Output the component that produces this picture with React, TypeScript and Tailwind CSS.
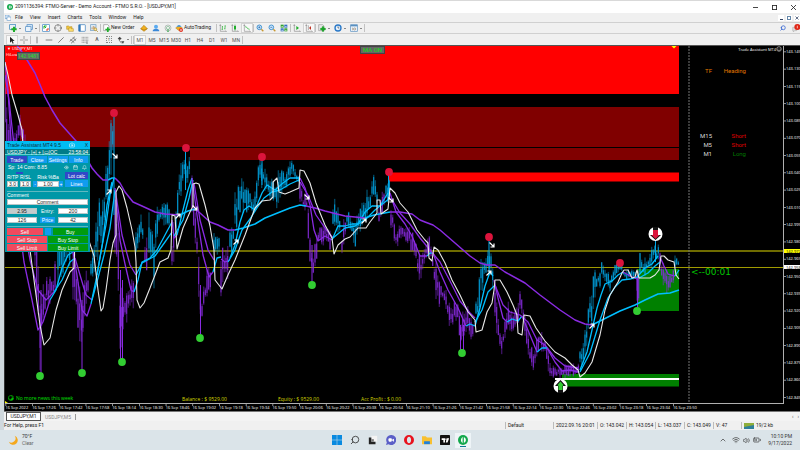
import type { ReactNode } from "react";
import { Bell, Calendar, Camera, ChevronUp, Eye, Search, Volume2, Wifi, BatteryMedium, Crosshair } from "lucide-react";

const BLUE = "#00a8e8";
const PURPLE = "#8a2be2";

type Band = { up: boolean; pts: [number, number, number][] };

// x, high, low for every leg of the price
const LEGS: Band[] = [
  { up: false, pts: [[5, 60, 150], [8, 110, 160], [12, 140, 190], [18, 107, 150], [22, 112, 150], [26, 125, 170], [32, 190, 250], [36, 225, 285], [40, 290, 374], [42, 280, 350], [46, 275, 310], [52, 270, 305], [56, 255, 300]] },
  { up: true, pts: [[58, 230, 290], [64, 220, 272], [70, 225, 268]] },
  { up: false, pts: [[73, 235, 300], [78, 270, 330], [82, 300, 371], [85, 270, 335], [89, 262, 300]] },
  { up: true, pts: [[91, 240, 290], [95, 225, 275], [98, 190, 262], [102, 205, 260], [105, 165, 225], [108, 145, 200], [111, 118, 180], [113, 114, 160]] },
  { up: false, pts: [[115, 180, 260], [118, 220, 300], [120, 270, 350], [122, 290, 361], [124, 300, 330], [127, 285, 322], [130, 284, 316], [133, 266, 326]] },
  { up: true, pts: [[136, 228, 266], [140, 208, 244], [143, 216, 250]] },
  { up: false, pts: [[145, 240, 275], [147, 235, 288]] },
  { up: true, pts: [[149, 208, 256], [152, 218, 262], [154, 225, 290], [157, 198, 238], [160, 200, 230], [164, 192, 228], [168, 193, 226], [170, 200, 240]] },
  { up: false, pts: [[172, 215, 290], [174, 212, 276]] },
  { up: true, pts: [[176, 205, 232], [178, 184, 215], [180, 165, 205], [183, 152, 198], [185, 150, 182], [188, 154, 186], [190, 148, 190]] },
  { up: false, pts: [[192, 175, 222], [194, 200, 240], [197, 212, 280], [199, 260, 310], [201, 290, 336], [204, 282, 308], [208, 266, 300], [211, 258, 290]] },
  { up: true, pts: [[214, 222, 264], [217, 226, 258], [219, 235, 262]] },
  { up: false, pts: [[221, 246, 300], [224, 248, 284], [228, 243, 280]] },
  { up: true, pts: [[230, 226, 260], [233, 220, 250], [235, 190, 242], [237, 186, 236], [240, 168, 218], [244, 182, 214], [248, 185, 215], [253, 202, 220], [256, 174, 208], [259, 160, 192], [262, 156, 188], [266, 168, 196], [271, 175, 204], [276, 180, 212], [280, 160, 198], [285, 172, 194], [290, 158, 182], [293, 156, 180], [298, 172, 188]] },
  { up: false, pts: [[300, 180, 202], [303, 194, 212], [307, 192, 214], [309, 215, 252], [312, 250, 284], [315, 238, 274], [318, 223, 247], [322, 220, 246], [327, 223, 247], [331, 230, 260]] },
  { up: true, pts: [[333, 196, 234], [336, 200, 230], [340, 210, 238]] },
  { up: false, pts: [[342, 220, 272], [345, 218, 240]] },
  { up: true, pts: [[347, 210, 230], [352, 212, 236], [355, 214, 250], [358, 212, 238], [362, 202, 228], [366, 190, 222], [370, 184, 214], [374, 170, 198], [377, 182, 214]] },
  { up: false, pts: [[379, 200, 224], [382, 190, 218], [384, 192, 214]] },
  { up: true, pts: [[386, 173, 208], [388, 172, 204], [390, 176, 205]] },
  { up: false, pts: [[391, 200, 230], [394, 222, 242], [397, 230, 248], [401, 220, 244], [405, 220, 242], [410, 226, 252], [414, 230, 254], [418, 250, 276], [421, 256, 286], [424, 242, 266], [428, 234, 260], [431, 238, 268], [434, 260, 284], [438, 265, 320], [441, 282, 304], [445, 284, 308], [449, 302, 330], [453, 303, 326], [457, 297, 320], [461, 315, 352], [465, 304, 334], [468, 306, 342], [473, 316, 340]] },
  { up: true, pts: [[476, 300, 322], [479, 280, 318], [482, 248, 302], [484, 250, 290], [487, 240, 284], [489, 238, 276], [491, 248, 280], [493, 268, 292]] },
  { up: false, pts: [[495, 278, 325], [498, 315, 342], [501, 335, 356], [505, 320, 346], [508, 295, 326], [512, 303, 336], [516, 308, 336], [520, 287, 324], [523, 298, 324], [526, 318, 344], [529, 334, 364], [532, 348, 375], [535, 344, 365], [539, 323, 350], [543, 334, 355], [547, 340, 366], [550, 358, 379], [554, 364, 378], [560, 366, 381], [566, 362, 378], [572, 360, 379], [578, 362, 378]] },
  { up: true, pts: [[580, 348, 372], [583, 345, 370], [586, 318, 358], [589, 302, 336], [592, 282, 326], [594, 270, 320], [597, 268, 296], [600, 262, 288], [603, 262, 278], [606, 266, 292], [610, 274, 292], [613, 266, 282], [617, 260, 278], [621, 263, 273], [625, 268, 280], [632, 265, 282], [636, 266, 280]] },
  { up: false, pts: [[637, 268, 308], [639, 268, 302]] },
  { up: true, pts: [[640, 250, 280], [643, 254, 278], [648, 256, 274], [652, 244, 270], [655, 238, 264], [658, 244, 268]] },
  { up: false, pts: [[660, 250, 274], [663, 260, 286], [666, 268, 296], [670, 270, 296], [673, 262, 288]] },
  { up: true, pts: [[675, 252, 274], [678, 254, 272]] },
];

const BAR_STEP = 1.668;

// small repeatable noise so the bars stay the same between renders
function noise(i: number) {
  const v = Math.sin(i * 127.1 + 11.7) * 43758.5453;
  return v - Math.floor(v);
}

function buildBars() {
  const bars: { x: number; hi: number; lo: number; top: number; bottom: number; up: boolean }[] = [];
  let n = 0;
  for (const leg of LEGS) {
    const { pts } = leg;
    const last = pts[pts.length - 1][0];
    for (let x = pts[0][0]; x <= last + 0.6; x += BAR_STEP) {
      let k = 0;
      while (k < pts.length - 2 && pts[k + 1][0] < x) k++;
      const a = pts[k];
      const b = pts[k + 1];
      const t = Math.min(1, (x - a[0]) / (b[0] - a[0]));
      const hi = a[1] + (b[1] - a[1]) * t;
      const lo = a[2] + (b[2] - a[2]) * t;
      const h = lo - hi;
      const wickHi = hi + h * 0.42 * noise(n);
      const wickLo = lo - h * 0.42 * noise(n + 500);
      const top = wickHi + (wickLo - wickHi) * 0.4 * noise(n + 900);
      const bottom = wickLo - (wickLo - wickHi) * 0.4 * noise(n + 1300);
      bars.push({ x, hi: wickHi, lo: wickLo, top, bottom, up: leg.up });
      n++;
    }
  }
  return bars;
}

const BARS = buildBars();

const SLOW: [string, string][] = [
  [PURPLE, "17,46 20,49 27,60 35,73 41,87 45,97 52,110 60,123 68,132 76,141 85,156 92,168 97,174 103,180 108,180"],
  ["#00bfff", "108,180 112,178 115,178"],
  [PURPLE, "115,178 120,183 125,192 133,202 142,206 155,212 165,214 180,215"],
  ["#00bfff", "180,215 188,211 195,209"],
  [PURPLE, "195,209 200,213 210,222 218,225 228,230 235,230"],
  ["#00bfff", "235,230 243,228 255,224 265,218 280,212 290,208 300,205 306,206"],
  [PURPLE, "306,206 315,208 325,211 345,216 365,218"],
  ["#00bfff", "365,218 374,215 390,212"],
  [PURPLE, "390,212 400,212 412,214 420,220 425,222 433,225 440,230 455,243 470,256 480,263 487,265 495,265 505,272 525,283 540,295 560,310 575,320 585,324 592,325"],
  ["#00bfff", "592,325 600,321 610,316 620,311 635,305 645,300 658,294 670,293 679,290"],
];

const FAST: [string, string][] = [
  [PURPLE, "5,62 8,90 11,140 16,200 24,262 32,300 38,330 43,322 50,300"],
  [PURPLE, "5,75 9,100 14,145 22,215 30,260 38,290 46,300 54,292"],
  ["#00bfff", "50,300 56,290 62,268 68,255 73,252"],
  ["#00bfff", "54,292 62,280 70,262 75,258"],
  [PURPLE, "73,252 77,275 82,310 87,316 91,304"],
  [PURPLE, "75,258 80,275 86,295 92,300"],
  ["#00bfff", "91,304 96,280 101,252 106,225 110,195 114,178"],
  ["#00bfff", "92,300 98,278 104,255 110,228 115,190"],
  ["#00bfff", "97,275 103,240 107,205 112,182"],
  [PURPLE, "116,200 120,240 125,264 131,290 134,292"],
  [PURPLE, "115,188 122,235 130,265 136,275"],
  ["#00bfff", "134,292 138,280 142,262 150,258 157,250 165,235 172,222"],
  ["#00bfff", "136,275 142,263 155,256 165,242 172,232"],
  [PURPLE, "172,220 174,238 177,235"],
  ["#00bfff", "177,235 183,210 188,190 192,178"],
  ["#00bfff", "174,236 183,220 189,198 193,180"],
  [PURPLE, "192,178 197,215 203,255 209,277 213,272"],
  [PURPLE, "194,183 200,220 208,250 214,260"],
  ["#00bfff", "213,272 217,258 221,257"],
  [PURPLE, "221,259 225,262 230,260"],
  ["#00bfff", "230,258 235,245 240,222 244,210 249,206 255,210 262,193 267,185 275,190 283,183 290,178 299,178"],
  ["#00bfff", "228,262 235,250 242,230 250,219 257,208 264,198 272,192 280,190 290,184 299,180"],
  [PURPLE, "300,178 305,188 310,205 314,230 318,241 325,236 332,240"],
  [PURPLE, "300,182 308,195 316,215 325,228 333,238"],
  ["#00bfff", "332,240 338,226 345,226 352,224 358,224 365,212 372,206 380,206 388,193"],
  ["#00bfff", "333,238 345,228 355,226 366,219 375,210 390,198"],
  [PURPLE, "390,193 396,212 405,224 412,236 420,256 427,256"],
  ["#00bfff", "427,256 430,253 433,253"],
  [PURPLE, "391,198 400,213 410,224 420,238 430,250 440,262 450,281 460,301 470,313 475,318"],
  [PURPLE, "433,253 440,272 448,290 458,308 466,326"],
  ["#00bfff", "466,326 470,324 475,326 480,308 485,286 490,272 493,276"],
  ["#00bfff", "475,322 482,310 488,292 494,286"],
  [PURPLE, "494,280 498,298 503,318 507,322"],
  ["#00bfff", "507,322 512,319 518,321 522,316"],
  [PURPLE, "495,285 503,305 510,312 520,315 528,322 537,340 545,345 555,358 565,366 578,368"],
  [PURPLE, "522,316 530,335 537,352"],
  ["#00bfff", "537,352 542,348 547,348"],
  [PURPLE, "547,348 555,362 562,371 570,370 578,372"],
  ["#00bfff", "580,370 587,352 592,330 597,308 601,295 605,284 612,281 618,275 623,272"],
  ["#00bfff", "580,372 590,353 600,320 608,298 615,287 622,280 630,279 637,277 645,268 652,264 658,256"],
  [PURPLE, "623,272 630,276 637,279"],
  ["#00bfff", "639,278 648,273 655,266 660,262"],
  [PURPLE, "660,257 664,266 668,274 675,276"],
  ["#00bfff", "675,276 679,270"],
];

const WHITE_LINE =
  "5,62 8,75 12,95 18,115 22,130 23,146 24,200 28,235 34,280 40,325 44,345 50,338 56,310 62,290 70,272 74,268 75,240 80,235 88,238 94,256 98,290 101,311 103,308 106,290 110,260 113,243 116,235 116,192 119,186 122,190 127,208 132,230 135,247 136,262 137,300 140,308 144,303 150,288 155,275 160,262 168,258 171,250 172,215 175,216 177,249 183,228 190,212 193,206 193,184 196,183 199,184 205,205 210,226 214,250 215,280 222,289 228,275 235,260 245,235 255,208 262,201 270,200 273,197 273,182 277,178 279,192 285,194 290,192 299,188 300,170 304,171 310,183 316,203 325,225 332,238 334,254 338,245 345,239 350,237 358,228 366,228 370,222 377,213 377,200 380,200 381,214 388,209 390,188 395,193 400,203 408,212 417,230 425,240 428,243 429,258 432,261 434,247 438,250 445,263 452,280 460,295 468,312 475,320 476,332 482,330 487,312 492,303 494,290 495,280 500,280 507,292 513,305 517,315 518,333 522,335 524,315 530,316 536,328 545,341 555,352 565,358 572,365 578,370 580,377 585,373 592,362 600,335 605,310 610,295 618,282 622,273 624,270 628,270 632,278 635,277 637,270 639,278 650,278 655,275 659,270 661,256 664,256 668,260 674,262 676,275 679,279";

const TOPS = [[114, 113], [186, 148], [262, 157], [389, 172], [489, 237], [620, 263]];
const BOTTOMS = [[40, 376], [82, 373], [122, 362], [200, 338], [312, 285], [462, 353], [637, 311]];
const UP_ARROWS = [[109, 192], [178, 216], [236, 242], [364, 221], [489, 273], [592, 326]];
const DOWN_ARROWS = [[115, 156], [195, 208], [307, 197], [391, 200], [492, 245]];

const PRICES = Array.from({ length: 21 }, (_, i) => (143.145 - i * 0.015).toFixed(3));
const TIMES = [
  "16 Sep 2022", "16 Sep 17:26", "16 Sep 17:42", "16 Sep 17:58", "16 Sep 18:14", "16 Sep 18:30", "16 Sep 18:46",
  "16 Sep 19:02", "16 Sep 19:18", "16 Sep 19:34", "16 Sep 19:50", "16 Sep 20:06", "16 Sep 20:22", "16 Sep 20:38",
  "16 Sep 20:54", "16 Sep 21:10", "16 Sep 21:26", "16 Sep 21:42", "16 Sep 21:58", "16 Sep 22:14", "16 Sep 22:30",
  "16 Sep 22:46", "16 Sep 23:02", "16 Sep 23:18", "16 Sep 23:34", "16 Sep 23:50",
];

function Chart() {
  return (
    <svg viewBox="5 45 795 366" className="block w-full h-auto bg-black font-['Open_Sans',sans-serif]">
      {/* Supply / demand zones */}
      <rect x="5" y="46" width="674" height="48" fill="#ff0000" />
      <rect x="20" y="107" width="659" height="40" fill="#800000" />
      <rect x="190" y="148" width="489" height="12" fill="#800000" />
      <rect x="389" y="172.5" width="290" height="9" fill="#ff0000" />
      <rect x="637" y="269" width="42" height="42" fill="#008000" />
      <rect x="562" y="374" width="117" height="12.5" fill="#008000" />

      <rect x="5" y="250" width="779" height="2" fill="#6f6c00" />
      <rect x="5" y="267" width="779" height="1" fill="#a09b00" />
      <line x1="689" x2="689" y1="46" y2="403" stroke="#777" strokeDasharray="2 1" />

      {/* Bars */}
      {BARS.map((b, i) => (
        <g key={i} fill={b.up ? BLUE : PURPLE}>
          <rect x={b.x - 0.7} y={b.hi} width="1.4" height={b.lo - b.hi} opacity="0.42" />
          <rect x={b.x - 0.5} y={b.top} width="1" height={b.bottom - b.top} opacity="0.85" />
        </g>
      ))}
      <path d="M120.500 270V361M122.500 280V361M41 290V374M82 300V371M200.500 285V336M637.500 275V309M460.500 325V352M463.500 325V352M312 245V284" stroke={PURPLE} strokeWidth="1" />
      <path d="M114 116V215M185.500 150V190M262 158V185M388.500 174V200M655.500 238V262M489 240V275" stroke={BLUE} strokeWidth="1" />

      {/* Averages */}
      <g fill="none" strokeLinejoin="round">
        {FAST.map(([color, points], i) => (
          <polyline key={i} points={points} stroke={color} strokeWidth="1.3" />
        ))}
        {SLOW.map(([color, points], i) => (
          <polyline key={i} points={points} stroke={color} strokeWidth="1.5" />
        ))}
        <polyline points={WHITE_LINE} stroke="#e8e8e8" strokeWidth="1.1" />
      </g>
      <rect x="555" y="378" width="124" height="2" fill="#fff" />

      {TOPS.map(([x, y]) => <circle key={x} cx={x} cy={y} r="3.900" fill="#dc143c" />)}
      {BOTTOMS.map(([x, y]) => <circle key={x} cx={x} cy={y} r="3.900" fill="#32cd32" />)}

      {UP_ARROWS.map(([x, y]) => (
        <path key={x} d={`M${x - 2.5} ${y + 2.5}L${x + 2} ${y - 2}M${x - 1.5} ${y - 2}H${x + 2}V${y + 1.5}`} stroke="#fff" strokeWidth="1.2" fill="none" />
      ))}
      {DOWN_ARROWS.map(([x, y]) => (
        <path key={x} d={`M${x - 2.5} ${y - 2.5}L${x + 2} ${y + 2}M${x - 1.5} ${y + 2}H${x + 2}V${y - 1.5}`} stroke="#fff" strokeWidth="1.2" fill="none" />
      ))}

      {/* Signal badges */}
      <g>
        <circle cx="655.500" cy="234" r="7" fill="#fff" />
        <path d="M653 227h5v8h3l-5.500 5l-5.500 -5h3z" fill="#111" />
        <path d="M653 230h5v5h1.500l-4 4l-4 -4h1.500z" fill="#dc143c" />
        <circle cx="560.500" cy="386" r="7" fill="#fff" />
        <path d="M558 393v-7h-3l5.500 -6l5.500 6h-3v7z" fill="#111" />
        <path d="M558.500 390v-4l-1 -1l3 -3.500l3 3.500l-1 1v4z" fill="#32cd32" />
      </g>
      <path d="M671.500 46h5l-2.500 2.500z" fill="#ff0" />
      <path d="M5 401l3 2h-3z" fill="#ff0" />

      {/* Labels drawn on the chart */}
      <text x="7" y="50" fontSize="4" fill="#fff">▼ USDJPY,M1</text>
      <text x="6" y="56" fontSize="4" fill="#fff">HiLow</text>
      <text x="776" y="51" textAnchor="end" fontSize="4" fill="#fff">Trade Assistant MT4</text>
      <g fill="none" stroke="#fff" strokeWidth="0.500">
        <circle cx="779" cy="49" r="2.300" />
        <path d="M777.500 49.500q1.500 2 3 0M778 48v.5M780 48v.5" />
      </g>
      <g fontFamily="Roboto, sans-serif" fontSize="6">
        <text x="712" y="73" textAnchor="end" fill="#e07800">TF</text>
        <text x="746" y="73" textAnchor="end" fill="#e07800">Heading</text>
        <text x="712" y="138" textAnchor="end" fill="#d8d8d8">M15</text>
        <text x="746" y="138" textAnchor="end" fill="#e00000">Short</text>
        <text x="712" y="147" textAnchor="end" fill="#d8d8d8">M5</text>
        <text x="746" y="147" textAnchor="end" fill="#e00000">Short</text>
        <text x="712" y="156" textAnchor="end" fill="#d8d8d8">M1</text>
        <text x="746" y="156" textAnchor="end" fill="#007a00">Long</text>
      </g>
      <text x="691" y="275" fontSize="9" fill="#00c800" fontFamily="DejaVu Sans, sans-serif">&lt;--00:01</text>

      <g fill="#d6d600" fontSize="5">
        <text x="182" y="401">Balance : $ 9529.00</text>
        <text x="278" y="401">Equity : $ 9529.00</text>
        <text x="361" y="401">Acc Profit : $ 0.00</text>
      </g>
      <circle cx="11" cy="398" r="2.800" fill="#00c000" />
      <path d="M9 397l2 -1l1 1.500l-2 2zM12.500 396l1 2" stroke="#000" strokeWidth="0.600" fill="#000" />
      <text x="16" y="400" fontSize="5" fill="#00e000">No more news this week</text>

      {/* Price scale */}
      <rect x="5" y="45" width="795" height="1" fill="#555" />
      <rect x="783" y="46" width="1" height="357" fill="#b0b0b0" />
      <rect x="5" y="403" width="779" height="1" fill="#b0b0b0" />
      {PRICES.map((p, i) => (
        <g key={p}>
          <rect x="784" y={51.5 + i * 17.28} width="2" height="0.700" fill="#ccc" />
          <text x="786" y={53 + i * 17.28} fontSize="4" fill="#fff">{p}</text>
        </g>
      ))}
      <rect x="784" y="249" width="16" height="4" fill="#ff0" />
      <text x="786" y="252.500" fontSize="4" fill="#000">142.972</text>
      <rect x="784" y="265" width="16" height="4" fill="#fff" />
      <text x="786" y="268.500" fontSize="4" fill="#000">142.958</text>

      {/* Time scale */}
      {TIMES.map((t, i) => (
        <g key={t}>
          <rect x={5.5 + i * 26.7} y="404" width="0.700" height="2" fill="#ccc" />
          <text x={5.5 + i * 26.7} y="409" fontSize="4" fill="#fff">{t}</text>
        </g>
      ))}
    </svg>
  );
}

function PanelInput({ label, value, muted }: { label: string; value: string; muted?: boolean }) {
  return (
    <input
      aria-label={label}
      defaultValue={value}
      className={`h-[6px] w-full min-w-0 border border-[#b9c6c8] px-0 text-center text-[5px] leading-[5px] text-[#222] ${muted ? "bg-[#c4cccc]" : "bg-white"}`}
    />
  );
}

function TradePanel() {
  return (
    <section className="absolute left-0 top-24 flex w-[85px] flex-col bg-[#0097a7] pb-px font-['Liberation_Sans',sans-serif] text-[5px] leading-[6px] text-white">
      <div className="flex h-[8px] items-center justify-between bg-[#00bcf2] px-0.5 text-[#0b3040]">
        <span className="w-[52px] whitespace-nowrap">Trade Assistant MT4 9.5</span>
        <Camera className="size-1.5 text-white" />
        <button className="leading-[6px]">X</button>
      </div>
      <div className="flex h-[6px] items-center justify-between border-b border-[#5fd0d0] bg-[#007c88] px-0.5">
        <span>USDJPY - |+| + |▭|OC</span>
        <span>23:58:04</span>
      </div>
      <div className="mt-px flex h-[7px] gap-px px-0.5">
        <button className="flex-1 bg-[#3048c8]">Trade</button>
        <button className="flex-1 bg-[#109cf0]">Close</button>
        <button className="flex-1 bg-[#109cf0]">Settings</button>
        <button className="flex-1 bg-[#109cf0]">Info</button>
      </div>
      <div className="flex h-2 items-center px-[3px]">
        <span className="flex-1">Sp: 14 Com: 8.85</span>
        <span className="flex gap-1"><Eye className="size-[5px]" /><Calendar className="size-[5px]" /><Bell className="size-[5px]" /></span>
      </div>
      <div className="mx-0.5 grid h-[17px] grid-cols-[24px_1fr_23px] gap-x-0.5">
        <div className="flex flex-col">
          <span className="mx-auto mt-px h-[2px] w-[7px] bg-[#3048c8]" />
          <div className="flex justify-between text-[5px] leading-[7px]"><span>R/TP</span><span>R/SL</span></div>
          <div className="flex gap-0.5"><PanelInput label="R/TP" value="3.0" /><PanelInput label="R/SL" value="1.0" /></div>
        </div>
        <div className="flex flex-col">
          <span className="mt-[3px] text-center leading-[7px]">Risk %Ba</span>
          <div className="flex">
            <button className="w-1 bg-[#109cf0] leading-[5px]">-</button>
            <div className="flex-1"><PanelInput label="Risk" value="1.00" /></div>
            <button className="w-1 bg-[#109cf0] leading-[5px]">+</button>
          </div>
        </div>
        <div className="flex flex-col gap-px pt-px">
          <button className="h-[7px] bg-[#3048c8]">Lot calc</button>
          <button className="h-[7px] bg-[#109cf0]">Lines</button>
        </div>
      </div>
      <label className="mx-0.5 mt-[3px] flex flex-col border-t border-[#5fb8c0]">
        <span className="leading-[7px]">Comment</span>
        <PanelInput label="Comment" value="Comment" />
      </label>
      <div className="mx-0.5 mt-[3px] grid grid-cols-[30px_1fr_30px] items-center gap-x-[3px] gap-y-[3px]">
        <PanelInput label="Lot" value="2.95" muted />
        <span className="text-center">Entry:</span>
        <PanelInput label="Entry" value="200" />
        <PanelInput label="Stop loss" value="126" />
        <button className="bg-[#109cf0]">Price</button>
        <PanelInput label="Take profit" value="42" />
      </div>
      <div className="mx-0.5 mt-[3px] flex flex-col gap-px border-t border-[#5fb8c0] pt-px">
        <div className="flex h-[7px] gap-px">
          <button className="flex-1 bg-[#f04a5e]">Sell</button>
          <button aria-label="Lock" className="mx-px w-1.5 bg-[#109cf0]" />
          <button className="flex-1 bg-[#009b10]">Buy</button>
        </div>
        <div className="flex h-[7px] gap-px">
          <button className="flex-1 bg-[#f04a5e]">Sell Stop</button>
          <button className="flex-1 bg-[#009b10]">Buy Stop</button>
        </div>
        <div className="flex h-[7px] gap-px">
          <button className="flex-1 bg-[#f04a5e]">Sell Limit</button>
          <button className="flex-1 bg-[#009b10]">Buy Limit</button>
        </div>
      </div>
    </section>
  );
}

function Icon({ children, className = "size-2" }: { children: ReactNode; className?: string }) {
  return <svg viewBox="0 0 12 12" fill="none" className={`shrink-0 ${className}`}>{children}</svg>;
}

function Tool({ label, children, on, wide }: { label: string; children: ReactNode; on?: boolean; wide?: boolean }) {
  return (
    <button
      aria-label={label}
      className={`flex h-[10px] items-center justify-center ${wide ? "w-4 gap-0.5" : "w-3"} ${on ? "border border-[#d4d4d4] bg-[#f8f8f8]" : ""}`}
    >
      {children}
      {wide && <Caret />}
    </button>
  );
}

function Caret() {
  return <svg viewBox="0 0 4 2" className="w-[2px] shrink-0"><path d="M0 0h4l-2 2z" fill="#222" /></svg>;
}

function Sep() {
  return <span className="h-2 w-px shrink-0 bg-[#c2c2c2]" />;
}

const AxesIcon = ({ children }: { children: ReactNode }) => (
  <Icon><path d="M2 1v10h9M1 3l1-2l1 2M10 10l1 1l-1 1" stroke="#888" strokeWidth="0.900" />{children}</Icon>
);

function Toolbar() {
  return (
    <div className="flex h-[11px] items-center border-t border-[#d0d0d0] bg-[#f0f0f0] pl-[3px]">
      <Tool label="New chart" wide>
        <Icon><rect x="1" y="1" width="9" height="7" fill="#e8f0f8" stroke="#2f7fb8" /><path d="M6 4h3v2.500h2.500v3h-2.500v2.500h-3v-2.500h-2.500v-3h2.500z" fill="#1fae2a" /></Icon>
      </Tool>
      <Tool label="Profiles" wide>
        <Icon><rect x="3" y="1" width="8" height="7" fill="#cfe3f5" stroke="#4a86c0" /><rect x="1" y="4" width="8" height="7" fill="#e9f3fc" stroke="#4a86c0" /></Icon>
      </Tool>
      <Sep />
      <Tool label="Market watch"><Icon><rect x="1" y="1" width="10" height="10" fill="#fff" stroke="#3d86c6" /><path d="M3 7V3h4M3 3l3 3" stroke="#1fae2a" strokeWidth="1.500" /><path d="M9 6v3H6" stroke="#e04020" strokeWidth="1.500" /></Icon></Tool>
      <Tool label="Data window"><Crosshair className="size-2 text-[#666]" /></Tool>
      <Tool label="Navigator"><Icon><path d="M1 3h3l1 1h4v4h-8z" fill="#f4c840" stroke="#a88010" strokeWidth="0.700" /><path d="M4 6h3l1 1h3v4h-7z" fill="#ffe070" stroke="#a88010" strokeWidth="0.700" /></Icon></Tool>
      <Tool label="Terminal"><Icon><rect x="1" y="1" width="10" height="10" rx="1" fill="#fff" stroke="#2f76b8" /><rect x="1" y="1" width="3" height="10" fill="#2f76b8" /></Icon></Tool>
      <Tool label="Strategy tester"><Icon><rect x="1" y="1" width="8" height="9" fill="#dce9f5" stroke="#6a98c0" /><path d="M3 8V5M5 8V3M7 8V4" stroke="#c08030" /><circle cx="8" cy="8" r="2" fill="#ffe9a0" stroke="#b08a20" /><path d="M9.500 9.500L12 12" stroke="#b08a20" /></Icon></Tool>
      <Sep />
      <button className="flex h-[10px] w-[37px] items-center pl-0.5 text-[5px]">
        <Icon><path d="M1 1h6l2 2v7h-8z" fill="#fff" stroke="#777" strokeWidth="0.800" /><path d="M6 5h2.500v2h2.500v2.500h-2.500v2.500h-2.500v-2.500h-2.500v-2.500h2.500z" fill="#1fae2a" /></Icon>
        <span className="whitespace-nowrap">New Order</span>
      </button>
      <Tool label="MetaEditor"><Icon><path d="M1 7l5-5l5 5l-5 4z" fill="#f0b020" stroke="#a87000" strokeWidth="0.800" /><path d="M1 7l5 2l5-2" stroke="#a87000" strokeWidth="0.800" /></Icon></Tool>
      <Tool label="Community"><Icon><circle cx="6" cy="4" r="3" fill="#5aaaf0" /><path d="M1 11q0-4 5-4t5 4z" fill="#3a88d8" /></Icon></Tool>
      <Tool label="Signals"><Icon><circle cx="6" cy="6" r="4.500" stroke="#9aa8a0" /><circle cx="6" cy="6" r="2.500" stroke="#7bb890" /><path d="M6 6l1 6h-2z" fill="#2aa040" /></Icon></Tool>
      <button className="flex h-[10px] w-10 items-center gap-px pl-px text-[5px]">
        <Icon><path d="M1 6l5-3l5 3l-5 4z" fill="#f0b020" stroke="#a87000" strokeWidth="0.600" /><path d="M2 4q4-5 8 0z" fill="#3a90d8" /><circle cx="9" cy="9" r="3" fill="#e03020" /><rect x="8" y="8" width="2" height="2" fill="#fff" /></Icon>
        <span className="whitespace-nowrap">AutoTrading</span>
      </button>
      <span className="w-0.5" />
      <Sep />
      <Tool label="Bar chart"><AxesIcon><path d="M5 3v6M5 8H4M5 4h1M9 2v6M8 7h1M9 3h1" stroke="#1fae2a" /></AxesIcon></Tool>
      <Tool label="Candlesticks"><AxesIcon><path d="M6 1v9" stroke="#1f8e2a" /><rect x="4.500" y="3" width="3" height="5" fill="#1fae2a" /></AxesIcon></Tool>
      <Tool label="Line chart" on><AxesIcon><path d="M3 4q3 0 4 3l3 1" stroke="#1fae2a" /></AxesIcon></Tool>
      <Sep />
      <Tool label="Zoom in"><Icon><circle cx="5" cy="5" r="3.500" fill="#cfe8ff" stroke="#2f86c8" strokeWidth="1.300" /><path d="M5 3.500v3M3.500 5h3" stroke="#2060a0" /><path d="M8 8l3 3" stroke="#c89830" strokeWidth="2" /></Icon></Tool>
      <Tool label="Zoom out"><Icon><circle cx="5" cy="5" r="3.500" fill="#cfe8ff" stroke="#2f86c8" strokeWidth="1.300" /><path d="M3.500 5h3" stroke="#2060a0" /><path d="M8 8l3 3" stroke="#c89830" strokeWidth="2" /></Icon></Tool>
      <Tool label="Tile windows"><Icon><rect x="1" y="1" width="4.500" height="4.500" fill="#2fa030" /><rect x="6.500" y="1" width="4.500" height="4.500" fill="#2f70c0" /><rect x="1" y="6.500" width="4.500" height="4.500" fill="#2f70c0" /><rect x="6.500" y="6.500" width="4.500" height="4.500" fill="#2fa030" /><path d="M2 4h2.500M7.500 4H10M2 9.500h2.500M7.500 9.500H10" stroke="#fff" /></Icon></Tool>
      <Sep />
      <Tool label="Auto scroll"><AxesIcon><path d="M5 3l4 3l-4 3z" fill="#1fae2a" /></AxesIcon></Tool>
      <Tool label="Chart shift" on><AxesIcon><path d="M9 3l-3 3l3 3z" fill="#c03020" /><path d="M5 2v7" stroke="#888" /></AxesIcon></Tool>
      <Sep />
      <Tool label="Indicators" wide><Icon><path d="M1 1h6l2 2v7h-8z" fill="#e8e8e8" stroke="#888" strokeWidth="0.800" /><path d="M6.500 4h2v2.500h2.500v2h-2.500v2.500h-2v-2.500h-2.500v-2h2.500z" fill="#10a020" stroke="#10a020" /></Icon></Tool>
      <Tool label="Periods" wide><Icon><circle cx="6" cy="6" r="4.500" fill="#e8f4ff" stroke="#2878c8" strokeWidth="2" /><path d="M6 3.500V6h2" stroke="#345" /></Icon></Tool>
      <Tool label="Templates" wide><Icon><rect x="1" y="1" width="10" height="10" fill="#e6f0fa" stroke="#5a90c0" /><path d="M1 2.500h10" stroke="#5a90c0" strokeWidth="2" /><path d="M3 6l2 1l2-1l2 1M3 9l2-1l2 1l2-1" stroke="#8a6a40" strokeWidth="0.800" /></Icon></Tool>
      <Sep />
      <span className="flex-1" />
      <button aria-label="Search" className="mr-1.5"><Search className="size-1.5 -scale-x-100 text-[#2f60d0]" strokeWidth={3} /></button>
      <button aria-label="Notifications">
        <Icon><path d="M1 5h6v5H4l-2 2V10H1z" fill="#ddd" stroke="#999" strokeWidth="0.600" /><circle cx="8" cy="4.500" r="4.500" fill="#e02818" /><path d="M8 2.500v4" stroke="#fff" /></Icon>
      </button>
    </div>
  );
}

const PERIODS = ["M1", "M5", "M15", "M30", "H1", "H4", "D1", "W1", "MN"];

function DrawBar() {
  return (
    <div className="flex h-[12px] items-center border-t border-[#d0d0d0] bg-[#f0f0f0] pl-0.5">
      <Tool label="Cursor" on><Icon><path d="M3 1v9l2.500-2l1.500 3.500l1.500-.7l-1.500-3.300h3z" fill="#222" /></Icon></Tool>
      <Tool label="Crosshair"><Icon><path d="M6 0v5M6 7v5M0 6h5M7 6h5" stroke="#777" /></Icon></Tool>
      <Sep />
      <Tool label="Vertical line"><Icon><path d="M6 1v10" stroke="#666" strokeWidth="1.200" /></Icon></Tool>
      <Tool label="Horizontal line"><Icon><path d="M1 6h10" stroke="#666" strokeWidth="1.200" /></Icon></Tool>
      <Tool label="Trendline"><Icon><path d="M2 10L10 2" stroke="#666" strokeWidth="1.200" /></Icon></Tool>
      <Tool label="Channel"><Icon><path d="M1 8L9 1M3 11L11 4M2 5l6 5M6 2l4 5" stroke="#555" strokeWidth="1" /></Icon></Tool>
      <Tool label="Fibonacci"><Icon><path d="M1 2h10M1 4.500h10M1 7h10M1 9.500h7" stroke="#777" strokeWidth="1" strokeDasharray="1.500 .6" /><path d="M9 8v4" stroke="#444" /></Icon></Tool>
      <button className="w-3 text-[5px] font-bold text-[#666]">A</button>
      <button className="flex w-3 justify-center"><span className="border border-dotted border-[#888] px-px text-[4px] leading-[5px] text-[#444]">T</span></button>
      <Tool label="Arrows" wide><Icon><path d="M1 4l3-3l3 3l-3 2z" fill="#444" /><path d="M6 8h5l-2 3.500z" fill="#444" /><path d="M3 6l4 5" stroke="#444" /></Icon></Tool>
      <Sep />
      <span className="w-px" />
      <Sep />
      {PERIODS.map((p) => (
        <button key={p} className={`h-[10px] w-3 text-center text-[5px] leading-[8px] text-[#555] ${p === "M1" ? "border border-[#d4d4d4] bg-[#f8f8f8]" : ""}`}>{p}</button>
      ))}
      <Sep />
    </div>
  );
}

function FtmoLogo({ className }: { className: string }) {
  return (
    <Icon className={className}>
      <circle cx="6" cy="6" r="6" fill="#12a84c" />
      <path d="M5.500 2q-4 4 0 8zM7 2.500q2.500 1 2.500 3.500t-2.500 3.500z" fill="#fff" />
    </Icon>
  );
}

const MENU = ["File", "View", "Insert", "Charts", "Tools", "Window", "Help"];
const QUOTE = ["O: 143.042", "H: 143.054", "L: 143.037", "C: 143.049"];

function Taskbar() {
  return (
    <footer className="grid h-5 grid-cols-[1fr_auto_1fr] items-center bg-[#dbe4e9] text-[5px] leading-[7px] text-[#333]">
      <div className="flex items-center gap-1 pl-2">
        <Icon className="size-2.5"><path d="M8 1a5.500 5.500 0 1 1-7 7a5 5 0 0 0 7-7z" fill="#f5a81c" /></Icon>
        <div><div>70°F</div><div className="text-[#666]">Clear</div></div>
      </div>
      <div className="flex items-center gap-2">
        <button aria-label="Start"><Icon className="size-2.5"><path d="M0 0h5.700v5.700H0zM6.300 0H12v5.700H6.300zM0 6.300h5.700V12H0zM6.300 6.300H12V12H6.300z" fill="#0a8ae0" /></Icon></button>
        <button aria-label="Search"><Search className="size-2.5 -scale-x-100 text-[#333]" /></button>
        <button aria-label="Task view"><Icon className="size-2.5"><rect x="4" y="1" width="7" height="7" fill="#f4f4f4" /><path d="M1 3h3v5h5v3H1z" fill="#222" /><path d="M4 8V5h3v3z" fill="#777" /></Icon></button>
        <button aria-label="Chat"><Icon className="size-2.5"><path d="M6 0a6 6 0 1 1-3 11l-3 1l1-3a6 6 0 0 1 5-9z" fill="#5b5fc7" /><rect x="3" y="4" width="4" height="4" rx="1" fill="#fff" /><path d="M7.500 5.500L9.500 4.500v3.500l-2-1z" fill="#fff" /></Icon></button>
        <button aria-label="Opera"><Icon className="size-2.5"><path fillRule="evenodd" d="M6 0a6 6 0 1 1 0 12A6 6 0 0 1 6 0zM6 2c-1.500 0-2.500 1.800-2.500 4s1 4 2.500 4s2.500-1.800 2.500-4S7.500 2 6 2z" fill="#e8121e" /></Icon></button>
        <button aria-label="Explorer"><Icon className="size-2.5"><path d="M0 1.500h4.500l1.500 1.500h6v8h-12z" fill="#f8c030" /><path d="M2.500 7.500h7v3.500h-7z" fill="#2080d8" /></Icon></button>
        <button aria-label="TradingView"><Icon className="size-2.5"><rect width="12" height="12" rx="1" fill="#111" /><path d="M2 4h4v5H4V6H2zM8 4h3L9 9H7z" fill="#fff" /><circle cx="7" cy="5" r=".8" fill="#fff" /></Icon></button>
        <button aria-label="FTMO" className="-m-[3px] flex flex-col items-center gap-px bg-[#eef4f7] px-[3px] pb-px pt-0.5">
          <FtmoLogo className="size-2.5" />
          <span className="h-px w-1.5 bg-[#0a7a90]" />
        </button>
      </div>
      <div className="flex items-center justify-end gap-[3px] pr-2">
        <ChevronUp className="mr-0.5 size-2" />
        <Wifi className="size-2" />
        <Volume2 className="size-[7px]" />
        <BatteryMedium className="size-2" />
        <div className="ml-1 text-right"><div>10:10 PM</div><div>9/17/2022</div></div>
      </div>
    </footer>
  );
}

export default function App() {
  return (
    <div className="min-h-screen bg-[#cfd8dd] font-['Roboto',sans-serif] text-[#222]">
      <main className="border-t border-[#d9d9d9] pl-1">
        {/* Title bar */}
        <header className="flex h-3 items-center bg-white pl-[3px] text-[5px]">
          <FtmoLogo className="size-1.5" />
          <h1 className="ml-0.5 flex-1">2091136394: FTMO-Server - Demo Account - FTMO S.R.O. - [USDJPY,M1]</h1>
          <div className="flex gap-[14px] pr-1">
            <button aria-label="Minimize"><Icon className="size-[5px]"><path d="M0 6h12" stroke="#222" strokeWidth="2" /></Icon></button>
            <button aria-label="Maximize"><Icon className="size-[5px]"><rect x="1" y="1" width="10" height="10" stroke="#222" strokeWidth="2" /></Icon></button>
            <button aria-label="Close"><Icon className="size-[5px]"><path d="M0 0l12 12M12 0L0 12" stroke="#222" strokeWidth="2" /></Icon></button>
          </div>
        </header>

        <nav className="flex h-[9px] items-center bg-[#f0f0f0] pl-px text-[5px]">
          <Icon className="size-1.5"><rect x="0" y="0" width="8" height="7" fill="#d8e8f8" stroke="#4a86c0" /><rect x="4" y="4" width="8" height="7" fill="#fff" stroke="#4a86c0" /></Icon>
          <ul className="ml-1 flex flex-1 gap-[7px]">
            {MENU.map((m) => <li key={m}><button>{m}</button></li>)}
          </ul>
          <div className="flex gap-0.5">
            <button aria-label="Minimize chart" className="flex size-1.5 items-end justify-center bg-white"><span className="mb-px h-px w-[3px] bg-[#346]" /></button>
            <button aria-label="Restore chart" className="flex size-1.5 items-center justify-center bg-white"><span className="size-1 border border-[#68a]" /></button>
            <button aria-label="Close chart" className="size-1.5 bg-white"><Icon className="size-1.5"><path d="M3 3l6 6M9 3l-6 6" stroke="#346" strokeWidth="1.500" /></Icon></button>
          </div>
        </nav>
        <Toolbar />
        <DrawBar />

        <div className="relative border-l border-[#333]">
          <Chart />
          <button className="absolute left-3 top-[7px] h-2 w-[23px] border border-[#444] bg-[#666] text-[5px] leading-[6px] text-[#2be02b]">142.9481</button>
          <button className="absolute left-[355px] top-px h-2 w-[25px] border border-[#444] bg-[#666] text-[6px] leading-[6px] text-[#10e010]">MA ON</button>
          <TradePanel />
        </div>

        {/* Chart tabs */}
        <div className="flex h-[10px] items-center border-t border-[#777] bg-[#f3f3f3] pl-0.5 text-[5px]">
          <button className="h-[9px] w-[35px] border border-[#555] bg-white leading-[7px]">USDJPY,M1</button>
          <button className="w-[35px] border-r border-[#999] leading-[6px] text-[#888]">USDJPY,M5</button>
          <span className="flex-1" />
          <span className="flex gap-1 pr-px text-[#444]"><button>‹</button><button>›</button></span>
        </div>

        {/* Status bar */}
        <div className="flex h-[9px] items-center whitespace-nowrap bg-[#f0f0f0] text-[5px] leading-[7px]">
          <span className="flex-1">For Help, press F1</span>
          <span className="w-12 border-l border-[#bbb] pl-0.5">Default</span>
          <span className="w-11 border-l border-[#bbb] pl-0.5">2022.09.16 20:01</span>
          {QUOTE.map((q) => <span key={q} className="w-[29px] border-l border-[#bbb] pl-0.5">{q}</span>)}
          <span className="w-7 border-l border-[#bbb] pl-0.5">V: 47</span>
          <span className="flex w-[59px] items-center gap-0.5 border-l border-[#bbb] pl-0.5">
            <svg viewBox="0 0 10 6" className="h-1.5 w-2.5"><rect width="10" height="6" fill="#2f7f9a" /><path d="M0 0h10v2L0 4z" fill="#8fae3a" /></svg>
            19/2 kb
          </span>
        </div>
      </main>
      <Taskbar />
    </div>
  );
}
